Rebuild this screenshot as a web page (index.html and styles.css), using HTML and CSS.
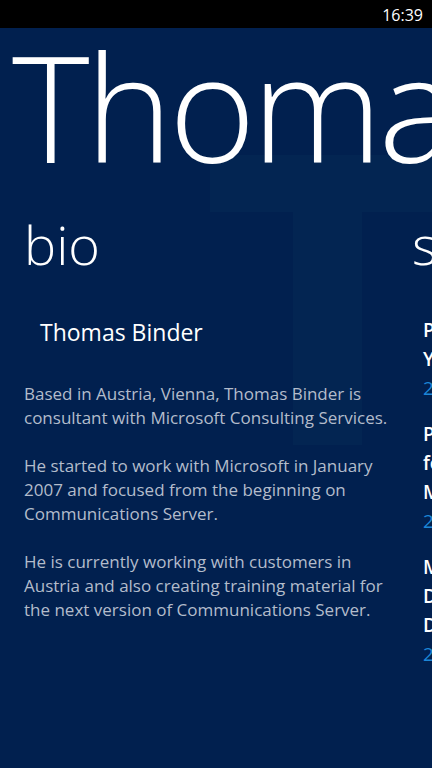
FILE: index.html
```html
<!DOCTYPE html>
<html lang="en">
<head>
<meta charset="utf-8">
<title>Thomas Binder</title>
<link rel="stylesheet" href="styles.css">
</head>
<body>
<div class="phone">
  <div class="status-bar"><span class="clock">16:39</span></div>
  <div class="panorama">
    <svg class="backdrop" width="432" height="740" viewBox="0 0 432 740" aria-hidden="true">
      <path d="M210 127 H432 V184 H362 V417 H293 V184 H210 Z" fill="#032552"/>
    </svg>
    <h1 class="pano-title">Thomas Binder</h1>
    <div class="pano-items">
      <section class="pano-item">
        <h2 class="item-header">bio</h2>
        <div class="item-body">
          <div class="bio-name">Thomas Binder</div>
          <p class="bio-text">Based in Austria, Vienna, Thomas Binder is consultant with Microsoft Consulting Services.</p>
          <p class="bio-text">He started to work with Microsoft in January 2007 and focused from the beginning on Communications Server.</p>
          <p class="bio-text">He is currently working with customers in Austria and also creating training material for the next version of Communications Server.</p>
        </div>
      </section>
      <section class="pano-item">
        <h2 class="item-header">sessions</h2>
        <div class="item-body">
          <ul class="session-list">
            <li class="session">
              <div class="session-title">Planning &amp; Deploying<br>Your Unified Communications</div>
              <div class="session-date">2011-03-22</div>
            </li>
            <li class="session">
              <div class="session-title">Preparing the Infrastructure<br>for Voice Migration to<br>Microsoft Lync Server 2010</div>
              <div class="session-date">2011-03-23</div>
            </li>
            <li class="session">
              <div class="session-title">Microsoft Lync Server 2010<br>Deep Dive:<br>Deployment &amp; Management</div>
              <div class="session-date">2011-03-24</div>
            </li>
          </ul>
        </div>
      </section>
    </div>
  </div>
</div>
</body>
</html>
```
FILE: styles.css
```css
html, body {
  margin: 0;
  padding: 0;
  background: #01204f;
}
.phone {
  width: 432px;
  height: 768px;
  overflow: hidden;
  font-family: "Open Sans", "Noto Sans", sans-serif;
  color: #ffffff;
  background: #01204f;
}
.status-bar {
  height: 28px;
  background: #000000;
  display: flex;
  justify-content: flex-end;
  align-items: center;
  padding-right: 9px;
}
.clock {
  font-size: 16px;
  line-height: 16px;
  color: #ffffff;
  padding-top: 1px;
}
.panorama {
  position: relative;
  height: 740px;
}
.backdrop {
  position: absolute;
  left: 0;
  top: 0;
  z-index: 0;
}
.pano-title {
  position: relative;
  z-index: 1;
  margin: 0;
  padding: 4px 0 0 12px;
  font-size: 148px;
  font-weight: 300;
  letter-spacing: -4px;
  line-height: 148px;
  height: 144px;
  white-space: nowrap;
  overflow: hidden;
}
.pano-items {
  position: relative;
  z-index: 1;
  display: flex;
  padding-left: 12px;
  margin-top: 36px;
}
.pano-item {
  flex: 0 0 388px;
  padding-left: 12px;
  box-sizing: border-box;
}
.item-header {
  margin: 0;
  font-size: 54px;
  font-weight: 300;
  line-height: 64px;
  white-space: nowrap;
}
.item-body {
  margin-top: 40px;
}
.bio-name {
  padding-left: 16px;
  font-size: 23px;
  line-height: 32px;
}
.bio-text {
  margin: 0 0 24px 0;
  font-size: 17px;
  line-height: 24px;
  color: #b3bccb;
}
.bio-name + .bio-text {
  margin-top: 34px;
}
.session-list {
  list-style: none;
  margin: 0;
  padding: 0 0 0 11px;
}
.session {
  margin-bottom: 17px;
  white-space: nowrap;
}
.session-title {
  font-size: 19px;
  font-weight: 600;
  line-height: 29px;
}
.session-date {
  font-size: 19px;
  line-height: 29px;
  color: #1c86d6;
}
```
